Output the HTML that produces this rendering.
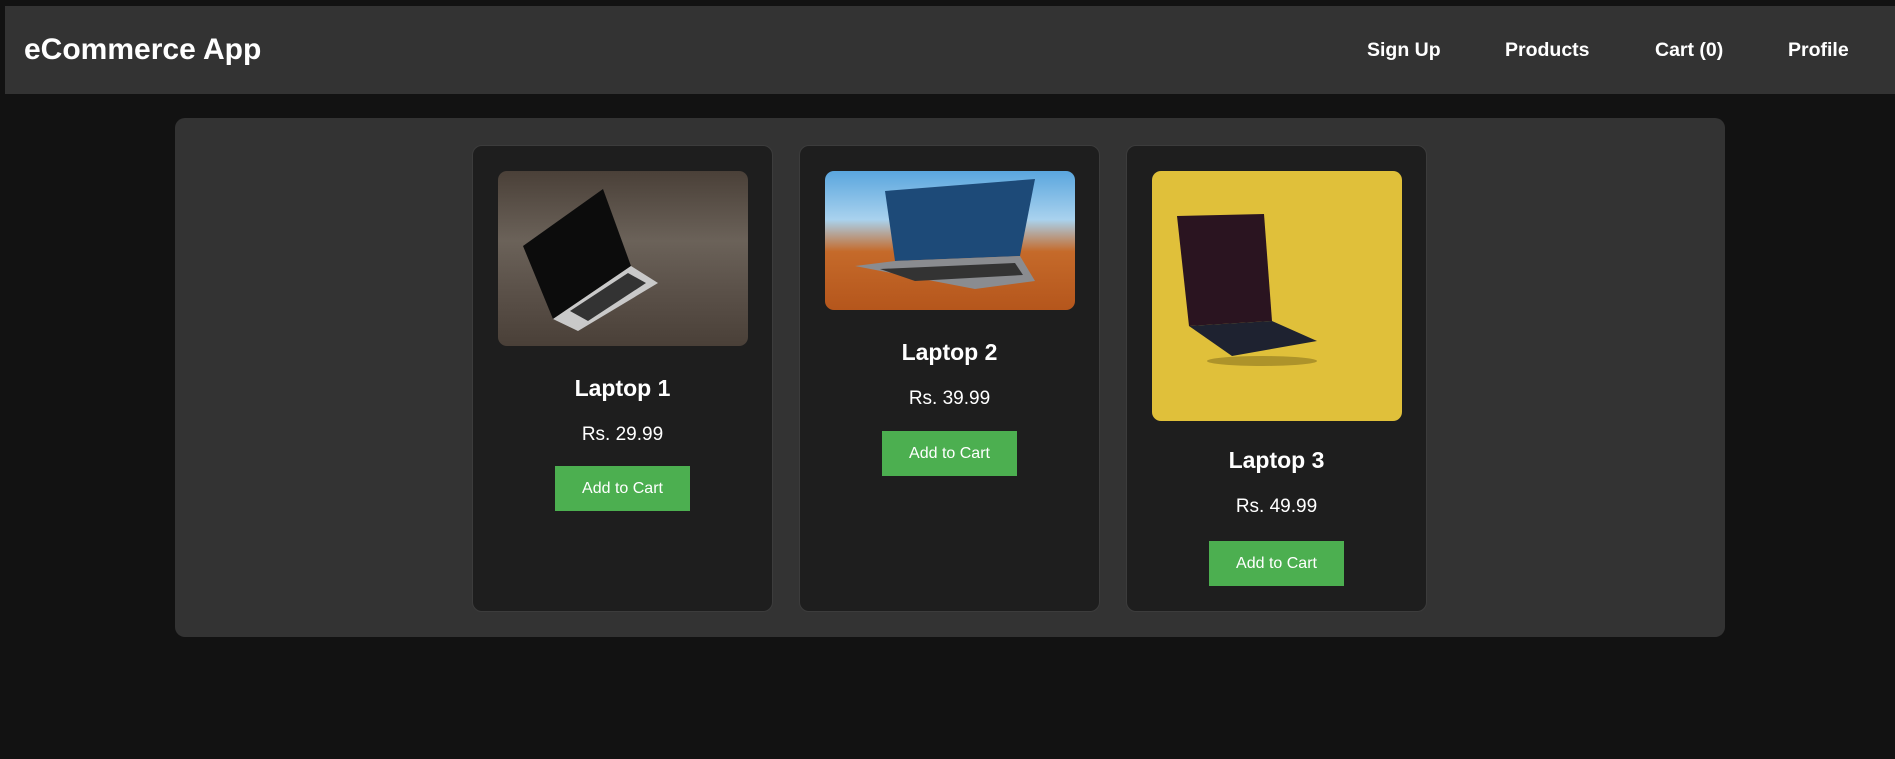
<!DOCTYPE html>
<html><head><meta charset="utf-8"><style>
*{box-sizing:border-box}
body{margin:0;background:#121212;width:1895px;height:759px;overflow:hidden;font-family:"Liberation Sans",Arial,sans-serif;color:#fff}
.hdr{position:absolute;left:5px;top:6px;width:1890px;height:88px;background:#333}
.title{position:absolute;left:19px;top:28px;font-size:30px;font-weight:bold;line-height:32px}
.nav{position:absolute;top:33px;font-size:19.5px;font-weight:bold;line-height:22px}
.cont{position:absolute;left:175px;top:118px;width:1550px;height:519px;background:#333;border-radius:10px}
.card{position:absolute;top:145px;width:301px;height:467px;background:#1e1e1e;border:1px solid #3c3c3c;border-radius:10px;text-align:center}
.img{position:absolute;left:25px;top:25px;width:250px;border-radius:9px;overflow:hidden}
.h{font-size:23px;font-weight:bold;line-height:28px;position:absolute;left:0;right:0}
.p{font-size:19px;line-height:22px;position:absolute;left:0;right:0}
.b{position:absolute;left:82px;width:135px;height:45px;background:#4caf50;font-size:16px;line-height:45px}
</style></head><body>
<div class="hdr"><div class="title">eCommerce App</div>
<div class="nav" style="left:1362px">Sign Up</div>
<div class="nav" style="left:1500px">Products</div>
<div class="nav" style="left:1650px">Cart (0)</div>
<div class="nav" style="left:1783px">Profile</div></div>
<div class="cont"></div>

<div class="card" style="left:472px">
<div class="img" style="height:175px;background:linear-gradient(180deg,#4a4038,#6b6259 40%,#5a5048 70%,#4a4038)">
<svg width="250" height="175"><polygon points="25,75 105,18 133,95 55,148" fill="#0c0c0c"/><polygon points="55,148 133,95 160,112 80,160" fill="#c9c9c9"/><polygon points="72,140 130,102 148,112 90,150" fill="#333"/></svg></div>
<div class="h" style="top:228px">Laptop 1</div>
<div class="p" style="top:278px">Rs. 29.99</div>
<div class="b" style="top:320px">Add to Cart</div></div>

<div class="card" style="left:799px">
<div class="img" style="height:139px;background:linear-gradient(180deg,#5aa6de,#a9d2ee 35%,#c56a2a 58%,#b5561c)">
<svg width="250" height="139"><polygon points="60,20 210,8 195,85 70,90" fill="#1d4a78"/><polygon points="30,95 70,90 195,85 210,110 150,118" fill="#8a8c90"/><polygon points="55,98 190,92 198,104 90,110" fill="#333"/></svg></div>
<div class="h" style="top:192px">Laptop 2</div>
<div class="p" style="top:242px">Rs. 39.99</div>
<div class="b" style="top:285px">Add to Cart</div></div>

<div class="card" style="left:1126px">
<div class="img" style="height:250px;background:#e0c03a">
<svg width="250" height="250"><polygon points="25,45 112,43 120,150 37,155" fill="#2a1420"/><polygon points="37,155 120,150 165,170 80,185" fill="#1e2230"/><ellipse cx="110" cy="190" rx="55" ry="5" fill="#8a7520" opacity=".6"/></svg></div>
<div class="h" style="top:300px">Laptop 3</div>
<div class="p" style="top:350px">Rs. 49.99</div>
<div class="b" style="top:395px">Add to Cart</div></div>
</body></html>
